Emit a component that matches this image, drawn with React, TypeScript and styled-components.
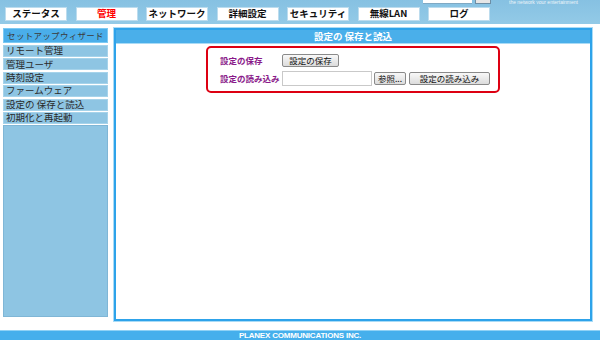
import React from 'react';
import styled, { createGlobalStyle } from 'styled-components';

const GlobalStyle = createGlobalStyle`
	html, body {
		margin: 0;
		padding: 0;
		background: #ffffff;
	}
	body {
		font-family: 'Noto Sans CJK JP', 'Liberation Sans', sans-serif;
	}
`;

const tabs = ['ステータス', '管理', 'ネットワーク', '詳細設定', 'セキュリティ', '無線LAN', 'ログ'];
const menu = ['リモート管理', '管理ユーザ', '時刻設定', 'ファームウェア', '設定の 保存と読込', '初期化と再起動'];

const App: React.FC = () => {
	return (
		<Page>
			<GlobalStyle />
			<Header>
				<TopStrip>
					<SearchBox />
					<SearchButton />
					<Tagline>the network your entertainment</Tagline>
				</TopStrip>
				<Nav>
					{tabs.map((t) => (
						<Tab key={t} active={t === '管理'}>
							{t}
						</Tab>
					))}
				</Nav>
			</Header>
			<Main>
				<Sidebar>
					<SideTitle>セットアップウィザード</SideTitle>
					{menu.map((m) => (
						<SideItem key={m}>{m}</SideItem>
					))}
					<SideFiller />
				</Sidebar>
				<Panel>
					<PanelTitle>設定の 保存と読込</PanelTitle>
					<PanelBody>
						<FormBox>
							<FormRow>
								<Label>設定の保存</Label>
								<Button width={55}>設定の保存</Button>
							</FormRow>
							<FormRow>
								<Label>設定の読み込み</Label>
								<FileInput />
								<Button width={30}>参照...</Button>
								<Button width={79} gap={3}>
									設定の読み込み
								</Button>
							</FormRow>
						</FormBox>
					</PanelBody>
				</Panel>
			</Main>
			<Footer>PLANEX COMMUNICATIONS INC.</Footer>
		</Page>
	);
};

const Page = styled.div`
	width: 600px;
	height: 342px;
	overflow: hidden;
	background: #ffffff;
`;

const Header = styled.div`
	height: 24px;
	background: linear-gradient(to bottom, #86c1e2, #93cae7);
	display: flex;
	flex-direction: column;
`;

const TopStrip = styled.div`
	height: 4px;
	overflow: hidden;
	display: flex;
	align-items: flex-end;
	padding-left: 423px;
	gap: 3px;
`;

const SearchBox = styled.div`
	width: 49px;
	height: 4px;
	background: #ffffff;
	border-bottom: 1px solid #7fa9c4;
`;

const SearchButton = styled.div`
	width: 14px;
	height: 4px;
	background: #e6e6e6;
	border: 1px solid #6d8ea5;
`;

const Tagline = styled.div`
	margin-left: 15px;
	color: #ffffff;
	font-family: 'Liberation Sans', sans-serif;
	font-size: 5px;
	line-height: 4px;
	white-space: nowrap;
	opacity: 0.85;
`;

const Nav = styled.div`
	display: flex;
	gap: 8.5px;
	padding-left: 5px;
	margin-top: 3px;
`;

const Tab = styled.div<{ active?: boolean }>`
	width: 60px;
	height: 12px;
	background: #ffffff;
	border: 1px solid #bcdcee;
	display: flex;
	align-items: center;
	justify-content: center;
	font-size: 9.5px;
	font-weight: bold;
	color: ${(p) => (p.active ? '#ff0000' : '#111111')};
	line-height: 1;
`;

const Main = styled.div`
	display: flex;
	align-items: flex-start;
	gap: 6px;
	padding-left: 3px;
	margin-top: 4px;
`;

const Sidebar = styled.div`
	width: 105px;
	height: 289px;
	display: flex;
	flex-direction: column;
	gap: 1.4px;
`;

const SideTitle = styled.div`
	height: 13px;
	background: #4aaeea;
	border: 1px solid #7ccaf3;
	margin-bottom: 0.6px;
	display: flex;
	align-items: center;
	justify-content: center;
	font-size: 8.5px;
	letter-spacing: 0.3px;
	color: #3a3a3a;
	white-space: nowrap;
	line-height: 1;
`;

const SideItem = styled.div`
	height: 10px;
	background: #8ec5e3;
	border: 0.5px solid #a6d3ea;
	padding-left: 2px;
	display: flex;
	align-items: center;
	font-size: 9.5px;
	color: #2a2a2a;
	line-height: 1;
	white-space: nowrap;
`;

const SideFiller = styled.div`
	flex: 1;
	background: #8ec5e3;
	border: 0.5px solid #7fb6d6;
`;

const Panel = styled.div`
	width: 474px;
	height: 289px;
	border: 2px solid #2ea3ea;
	box-shadow: 0 0 0 1px #a9dbf6;
	display: flex;
	flex-direction: column;
`;

const PanelTitle = styled.div`
	height: 13px;
	background: #4aafea;
	display: flex;
	align-items: center;
	justify-content: center;
	color: #ffffff;
	font-size: 9.5px;
	font-weight: bold;
	line-height: 1;
`;

const PanelBody = styled.div`
	flex: 1;
	background: #ffffff;
	border-top: 1px solid #a9dbf6;
	padding-top: 2px;
`;

const FormBox = styled.div`
	width: 278px;
	height: 38px;
	margin: 0 auto;
	border: 2.5px solid #dd0012;
	border-radius: 5px;
	padding: 5px 0 0 12px;
	display: flex;
	flex-direction: column;
	gap: 4px;
`;

const FormRow = styled.div`
	display: flex;
	align-items: center;
	height: 14px;
`;

const Label = styled.div`
	width: 62px;
	font-size: 8.5px;
	font-weight: bold;
	color: #8a1a8a;
	white-space: nowrap;
`;

const Button = styled.div<{ width: number; gap?: number }>`
	width: ${(p) => p.width}px;
	height: 11px;
	margin-left: ${(p) => p.gap ?? 0}px;
	border: 1px solid #8a8a8a;
	border-radius: 2px;
	background: linear-gradient(to bottom, #f8f8f8, #dcdcdc);
	display: flex;
	align-items: center;
	justify-content: center;
	font-size: 8.5px;
	color: #111111;
	line-height: 1;
	white-space: nowrap;
`;

const FileInput = styled.div`
	width: 88px;
	height: 13px;
	border: 1px solid #c9c9c9;
	background: #ffffff;
	margin-right: 2px;
`;

const Footer = styled.div`
	margin-top: 9px;
	height: 9px;
	background: #45afec;
	border-top: 1px solid #8fd2f6;
	display: flex;
	align-items: center;
	justify-content: center;
	color: #ffffff;
	font-family: 'Liberation Sans', sans-serif;
	font-size: 8px;
	font-weight: bold;
	letter-spacing: -0.2px;
	line-height: 1;
`;

export default App;
